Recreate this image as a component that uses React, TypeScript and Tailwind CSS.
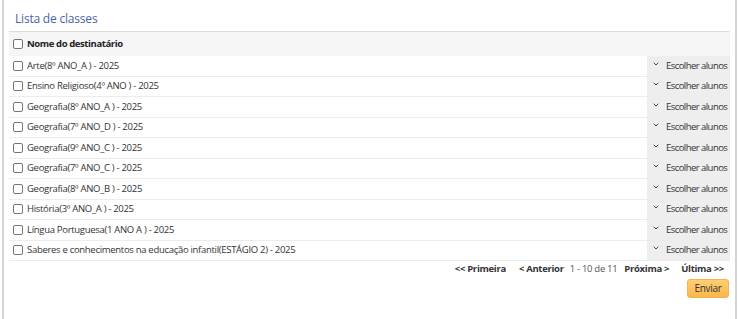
import { ChevronDown } from "lucide-react";

const classes = [
  "Arte(8º ANO_A ) - 2025",
  "Ensino Religioso(4º ANO ) - 2025",
  "Geografia(8º ANO_A ) - 2025",
  "Geografia(7º ANO_D ) - 2025",
  "Geografia(9º ANO_C ) - 2025",
  "Geografia(7º ANO_C ) - 2025",
  "Geografia(8º ANO_B ) - 2025",
  "História(3º ANO_A ) - 2025",
  "Língua Portuguesa(1 ANO A ) - 2025",
  "Saberes e conhecimentos na educação infantil(ESTÁGIO 2) - 2025",
];

function Box() {
  return <span className="inline-block w-[10px] h-[10px] border border-[#767676] rounded-[2px] bg-white shrink-0" />;
}

export default function App() {
  return (
    <div className="w-[739px] h-[319px] bg-white font-['Open_Sans',sans-serif] text-[#333] overflow-hidden tracking-[-0.3px]">
      <div className="ml-[2px] mr-[2px] h-full border-l-2 border-r-2 border-[#d4d4d4] pl-[5px] pr-[5px]">
        <div className="pt-[11px] pl-[6px] h-[31px] text-[12px] text-[#4b63a8] leading-[16px] tracking-[-0.2px]">Lista de classes</div>
        <div className="border-t border-[#dcdcdc]">
          <div className="h-[24px] bg-[#f5f5f5] flex items-center pl-[4px] gap-[4px] text-[9.5px] font-bold text-[#222] tracking-[-0.4px]">
            <Box />
            <span>Nome do destinatário</span>
          </div>
          {classes.map((c) => (
            <div key={c} className="h-[20.5px] flex items-stretch border-b border-[#ececec] text-[9.5px] whitespace-nowrap">
              <div className="flex-1 flex items-center gap-[4px] pl-[4px]">
                <Box />
                <span>{c}</span>
              </div>
              <div className="w-[83px] bg-[#eeeeee] flex items-center gap-[6px] pl-[5px]">
                <ChevronDown size={8} strokeWidth={3} className="text-[#444] -mt-[4px] shrink-0" />
                <span className="tracking-[-0.55px]">Escolher alunos</span>
              </div>
            </div>
          ))}
        </div>
        <div className="flex justify-end items-center h-[16px] pr-[6px] text-[9.5px] text-[#333] whitespace-nowrap">
          <span className="font-bold mr-[13px]">&lt;&lt; Primeira</span>
          <span className="font-bold mr-[6px]">&lt; Anterior</span>
          <span className="text-[#555] mr-[7px]">1 - 10 de 11</span>
          <span className="font-bold mr-[12px]">Próxima &gt;</span>
          <span className="font-bold">Última &gt;&gt;</span>
        </div>
        <div className="flex justify-end mt-[2px] pr-[1px]">
          <button className="h-[19px] w-[42px] text-[10px] text-[#333] rounded-[3px] border border-[#f0b44a] bg-gradient-to-b from-[#ffcf73] to-[#fbb64a]">Enviar</button>
        </div>
      </div>
    </div>
  );
}
